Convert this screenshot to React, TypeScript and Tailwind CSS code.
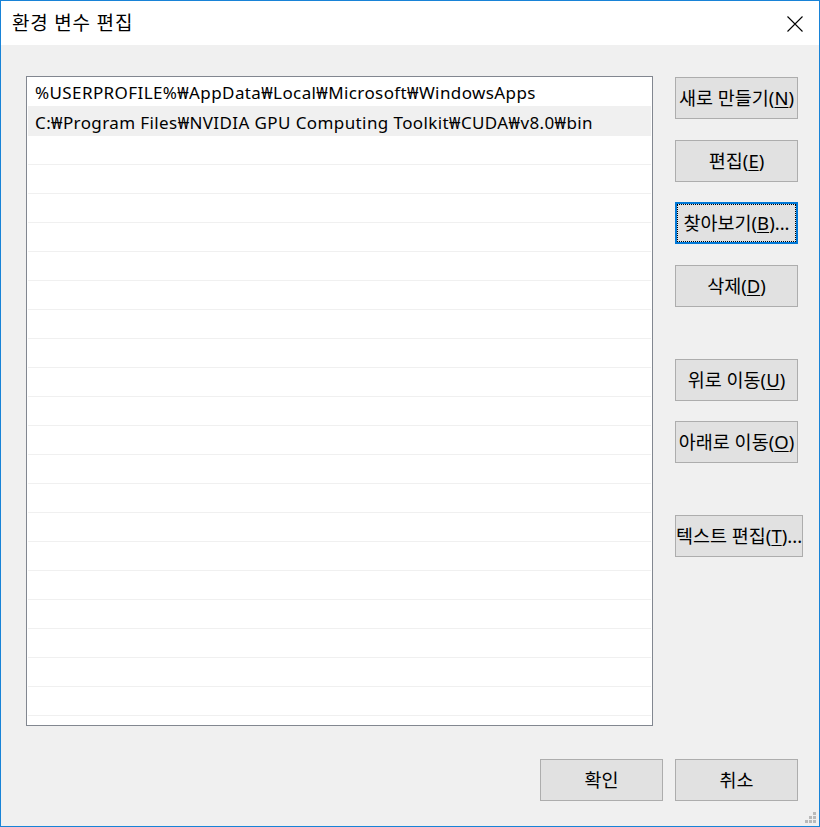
const FONT = { fontFamily: "'Noto Sans', 'Noto Sans CJK KR', sans-serif" };

const paths = [
  "%USERPROFILE%₩AppData₩Local₩Microsoft₩WindowsApps",
  "C:₩Program Files₩NVIDIA GPU Computing Toolkit₩CUDA₩v8.0₩bin",
];

function Btn({
  label,
  mn,
  suffix = "",
  width = "w-[123px]",
  focused = false,
  className = "",
}: {
  label: string;
  mn?: string;
  suffix?: string;
  width?: string;
  focused?: boolean;
  className?: string;
}) {
  const text = (
    <span className="whitespace-nowrap">
      {label}
      {mn && (
        <>
          (<span className="underline underline-offset-2">{mn}</span>)
        </>
      )}
      {suffix}
    </span>
  );
  if (focused) {
    return (
      <div className={`${width} h-[42px] border-2 border-[#0078d7] bg-[#e1e1e1] ${className}`}>
        <div className="w-full h-full border border-dotted border-black flex items-center justify-center text-[18.5px] text-black">
          {text}
        </div>
      </div>
    );
  }
  return (
    <div
      className={`${width} h-[42px] border border-[#adadad] bg-[#e1e1e1] flex items-center justify-center text-[18.5px] text-black ${className}`}
    >
      {text}
    </div>
  );
}

export default function App() {
  const rows = Array.from({ length: 23 }, (_, i) => i);
  return (
    <div
      className="w-[820px] h-[827px] border border-[#1883d7] flex flex-col overflow-hidden"
      style={FONT}
    >
      {/* Title bar */}
      <div className="h-[44px] bg-white flex items-center justify-between pl-[11px] pr-[16px] shrink-0">
        <span className="text-[19px] text-black tracking-[0.8px]">환경 변수 편집</span>
        <svg width="16" height="16" viewBox="0 0 16 16" className="mt-[1px]">
          <path d="M0.5 0.5 L15.5 15.5 M15.5 0.5 L0.5 15.5" stroke="#000" strokeWidth="1.1" />
        </svg>
      </div>

      {/* Body */}
      <div className="relative flex-1 bg-[#f0f0f0] flex flex-col pl-[25px] pt-[31px]">
        <div className="flex gap-[22px]">
          {/* List */}
          <div className="w-[627px] h-[650px] border border-[#828790] bg-white pl-[1px] pr-[1px] overflow-hidden">
            {rows.map((i) => (
              <div
                key={i}
                className={`h-[29px] flex items-center pl-[7px] pt-[3px] text-[17px] tracking-[0.4px] text-black whitespace-nowrap ${
                  i === 0 ? "" : "border-t border-[#f0f0f0]"
                } ${i === 1 ? "bg-[#f0f0f0]" : ""}`}
              >
                {paths[i] ?? ""}
              </div>
            ))}
          </div>

          {/* Side buttons */}
          <div className="flex flex-col pt-[1px]">
            <Btn label="새로 만들기" mn="N" />
            <Btn label="편집" mn="E" className="mt-[21px]" />
            <Btn label="찾아보기" mn="B" suffix="..." focused className="mt-[20px]" />
            <Btn label="삭제" mn="D" className="mt-[21px]" />
            <Btn label="위로 이동" mn="U" className="mt-[52px]" />
            <Btn label="아래로 이동" mn="O" className="mt-[20px]" />
            <Btn label="텍스트 편집" mn="T" suffix="..." width="w-[128px]" className="mt-[52px]" />
          </div>
        </div>

        {/* Bottom buttons */}
        <div className="flex justify-end gap-[12px] pr-[21px] mt-[33px]">
          <Btn label="확인" />
          <Btn label="취소" />
        </div>

        {/* Resize grip */}
        <svg width="12" height="12" viewBox="0 0 12 12" className="absolute right-[2px] bottom-[2px]">
          <g fill="#b9b9b9">
            <rect x="8" y="0" width="3" height="3" />
            <rect x="4" y="4" width="3" height="3" />
            <rect x="8" y="4" width="3" height="3" />
            <rect x="0" y="8" width="3" height="3" />
            <rect x="4" y="8" width="3" height="3" />
            <rect x="8" y="8" width="3" height="3" />
          </g>
        </svg>
      </div>
    </div>
  );
}
